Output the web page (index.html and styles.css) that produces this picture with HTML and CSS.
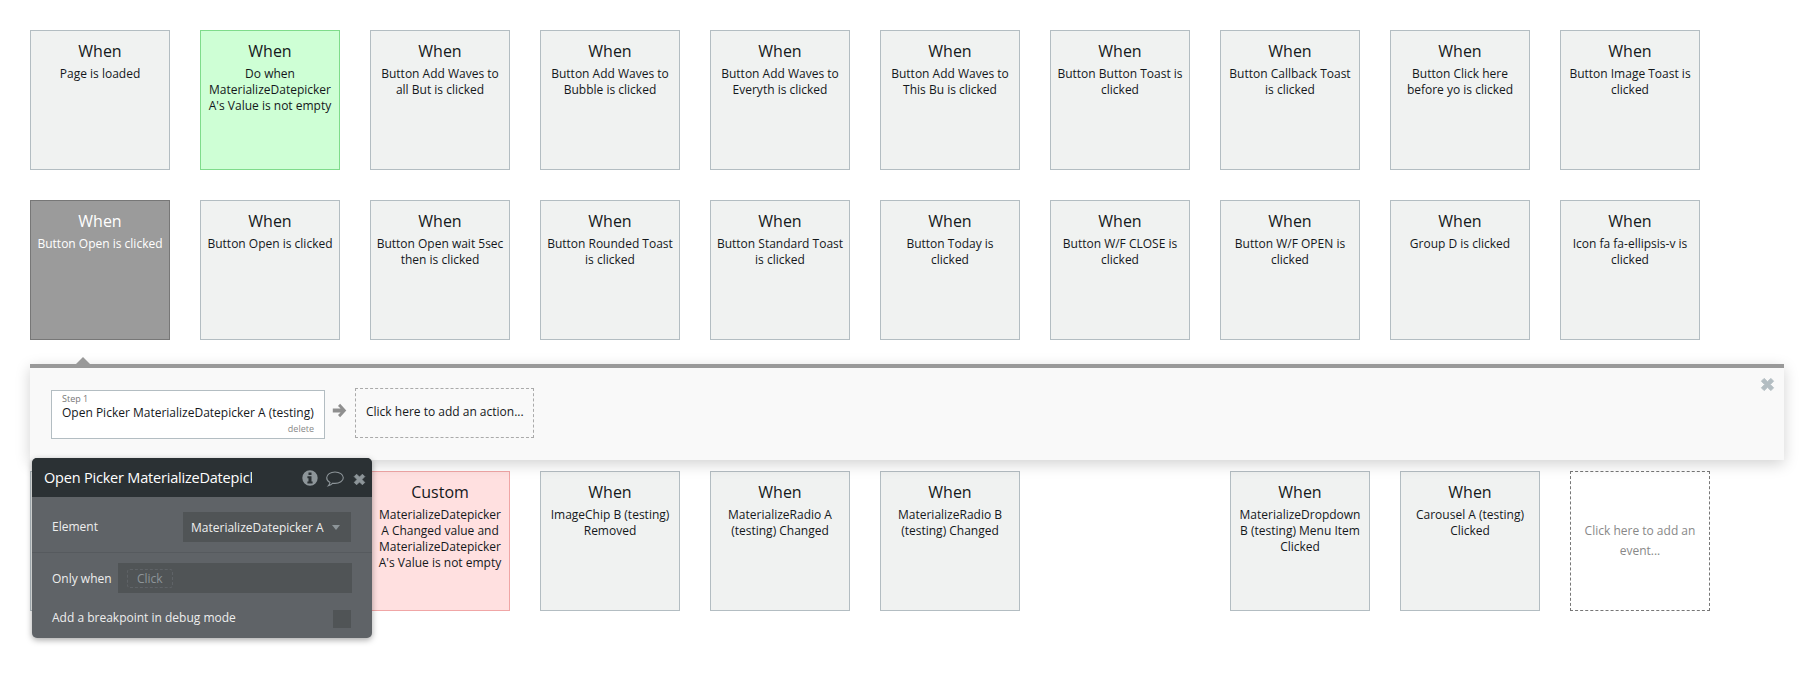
FILE: index.html
```html
<!DOCTYPE html>
<html lang="en">
<head>
    <meta charset="UTF-8">
    <meta name="viewport" content="width=device-width, initial-scale=1.0">
    <title>Workflow editor</title>
    <link rel="stylesheet" href="styles.css">
</head>
<body>
    <div class="row">
        <div class="card"><h3>When</h3><p>Page is loaded</p></div>
        <div class="card green"><h3>When</h3><p>Do when MaterializeDatepicker A's Value is not empty</p></div>
        <div class="card"><h3>When</h3><p>Button Add Waves to all But is clicked</p></div>
        <div class="card"><h3>When</h3><p>Button Add Waves to Bubble is clicked</p></div>
        <div class="card"><h3>When</h3><p>Button Add Waves to Everyth is clicked</p></div>
        <div class="card"><h3>When</h3><p>Button Add Waves to This Bu is clicked</p></div>
        <div class="card"><h3>When</h3><p>Button Button Toast is clicked</p></div>
        <div class="card"><h3>When</h3><p>Button Callback Toast is clicked</p></div>
        <div class="card"><h3>When</h3><p>Button Click here before yo is clicked</p></div>
        <div class="card"><h3>When</h3><p>Button Image Toast is clicked</p></div>
    </div>
    <div class="row">
        <div class="card selected"><h3>When</h3><p>Button Open is clicked</p></div>
        <div class="card"><h3>When</h3><p>Button Open is clicked</p></div>
        <div class="card"><h3>When</h3><p>Button Open wait 5sec then is clicked</p></div>
        <div class="card"><h3>When</h3><p>Button Rounded Toast is clicked</p></div>
        <div class="card"><h3>When</h3><p>Button Standard Toast is clicked</p></div>
        <div class="card"><h3>When</h3><p>Button Today is clicked</p></div>
        <div class="card"><h3>When</h3><p>Button W/F CLOSE is clicked</p></div>
        <div class="card"><h3>When</h3><p>Button W/F OPEN is clicked</p></div>
        <div class="card"><h3>When</h3><p>Group D is clicked</p></div>
        <div class="card"><h3>When</h3><p>Icon fa fa-ellipsis-v is clicked</p></div>
    </div>

    <div class="panel">
        <span class="panel-notch"></span>
        <div class="step">
            <span class="step-num">Step 1</span>
            <span class="step-name">Open Picker MaterializeDatepicker A (testing)</span>
            <span class="step-delete">delete</span>
        </div>
        <svg class="arrow" viewBox="0 0 14 15"><path d="M7.600 .8 13.800 7.500 7.600 14.200 5.500 12.100 8.100 9.500H.3V5.500H8.100L5.500 2.900z"/></svg>
        <div class="add-action">Click here to add an action...</div>
        <svg class="panel-close" viewBox="0 0 13 13"><path d="M3.600 1.200 6.500 4.100 9.400 1.200 11.800 3.600 8.900 6.500 11.800 9.400 9.400 11.800 6.500 8.900 3.600 11.800 1.200 9.400 4.100 6.500 1.200 3.600z"/></svg>
    </div>

    <div class="row row-last">
        <div class="card"></div>
        <div class="card"></div>
        <div class="card red"><h3>Custom</h3><p>MaterializeDatepicker A Changed value and MaterializeDatepicker A's Value is not empty</p></div>
        <div class="card"><h3>When</h3><p>ImageChip B (testing) Removed</p></div>
        <div class="card"><h3>When</h3><p>MaterializeRadio A (testing) Changed</p></div>
        <div class="card"><h3>When</h3><p>MaterializeRadio B (testing) Changed</p></div>
        <div class="card push"><h3>When</h3><p>MaterializeDropdown B (testing) Menu Item Clicked</p></div>
        <div class="card"><h3>When</h3><p>Carousel A (testing) Clicked</p></div>
        <div class="card add-event"><p>Click here to add an event...</p></div>
    </div>

    <div class="popup">
        <div class="popup-head">
            <span class="popup-title">Open Picker MaterializeDatepicker A (testing)</span>
            <svg class="head-icon info" viewBox="0 0 16 16"><path fill-rule="evenodd" d="M8 .3a7.700 7.700 0 1 0 0 15.400A7.700 7.700 0 0 0 8 .3zM6.500 2.600h3v2.500h-3zM5.400 6.300h4.100v5.200h1.100v2H5.400v-2h1.100V8.300H5.400z"/></svg>
            <svg class="head-icon bubble" viewBox="0 0 18 16"><path d="M9 1C13.500 1 17.300 3.500 17.300 6.700S13.500 12.400 9 12.400C8.200 12.400 7.500 12.300 6.800 12.200 5.800 13.300 4.300 14.300 2.300 14.800 3.200 13.800 3.800 12.700 4 11.500 2 10.500.7 8.700.7 6.700.7 3.500 4.500 1 9 1z"/></svg>
            <svg class="head-icon close" viewBox="0 0 13 13"><path d="M3.600 1.200 6.500 4.100 9.400 1.200 11.800 3.600 8.900 6.500 11.800 9.400 9.400 11.800 6.500 8.900 3.600 11.800 1.200 9.400 4.100 6.500 1.200 3.600z"/></svg>
        </div>
        <div class="popup-row border">
            <label>Element</label>
            <div class="dropdown">MaterializeDatepicker A<span class="caret"></span></div>
        </div>
        <div class="popup-row only-when">
            <label>Only when</label>
            <div class="cond"><span class="cond-click">Click</span></div>
        </div>
        <div class="popup-row breakpoint">
            <label>Add a breakpoint in debug mode</label>
            <span class="check"></span>
        </div>
    </div>
</body>
</html>
```

FILE: styles.css
```css
body {
    font-family: "Open Sans", sans-serif;
    margin: 0;
    padding: 30px 0 0 30px;
    background: #fff;
    color: #14181b;
    height: 650px;
    overflow: hidden;
    position: relative;
}
.row {
    display: flex;
    gap: 30px;
    margin-bottom: 30px;
}
.card {
    box-sizing: border-box;
    width: 140px;
    height: 140px;
    flex: none;
    padding: 9px 5px;
    text-align: center;
    background: #f0f2f1;
    border: 1px solid #b3bdc2;
}
.card h3 {
    margin: 0;
    font-size: 16px;
    font-weight: 400;
    line-height: 22px;
}
.card p {
    margin: 4px 0 0;
    font-size: 12px;
    line-height: 16px;
}
.green {
    background: #ceffd5;
    border-color: #7fdc8b;
}
.red {
    background: #ffe0e0;
    border-color: #f0a6a6;
}
.selected {
    background: #9b9b9b;
    border-color: #777;
    color: #fff;
}
.push {
    margin-left: 180px;
}
.add-event {
    background: #fff;
    border: 1px dashed #777;
    color: #888;
    display: flex;
    align-items: center;
}
.add-event p {
    margin: 0;
    line-height: 20px;
}

.panel {
    box-sizing: border-box;
    position: relative;
    width: 1754px;
    height: 96px;
    margin: -6px 0 11px;
    padding: 20px 21px 0;
    display: flex;
    align-items: flex-start;
    background: #f9f9f9;
    border-top: 4px solid #999;
    box-shadow: 0 4px 14px rgba(0, 0, 0, 0.18);
}
.panel-notch {
    position: absolute;
    left: 46px;
    top: -11px;
    border: 7px solid transparent;
    border-top: 0;
    border-bottom-color: #999;
}
.step {
    box-sizing: border-box;
    width: 274px;
    height: 49px;
    margin-top: 2px;
    padding: 2px 10px 0;
    display: flex;
    flex-direction: column;
    background: #fff;
    border: 1px solid #b3bdc2;
    font-size: 12px;
}
.step-num {
    font-size: 9px;
    line-height: 11px;
    color: #777;
}
.step-name {
    line-height: 17px;
    white-space: nowrap;
}
.step-delete {
    margin-top: 1px;
    font-size: 9px;
    line-height: 14px;
    color: #888;
    text-align: right;
}
.arrow {
    width: 15px;
    height: 15px;
    margin: 15px 8px 0 7px;
    fill: #8f8f8f;
}
.add-action {
    box-sizing: border-box;
    width: 179px;
    height: 50px;
    padding-left: 10px;
    line-height: 46px;
    font-size: 12px;
    white-space: nowrap;
    border: 1px dashed #aaa;
}
.panel-close {
    position: absolute;
    right: 9px;
    top: 9px;
    width: 15px;
    height: 15px;
    fill: #b3bdc2;
    stroke: #b3bdc2;
    stroke-width: 0.8;
    stroke-linejoin: round;
}

.popup {
    position: absolute;
    left: 32px;
    top: 458px;
    width: 340px;
    height: 180px;
    border-radius: 5px;
    background: #5f6367;
    color: #eee;
    font-size: 12px;
    box-shadow: 0 2px 6px rgba(0, 0, 0, 0.35);
    overflow: hidden;
}
.popup-head {
    display: flex;
    align-items: center;
    height: 39px;
    padding: 0 6px 0 12px;
    background: #2b3134;
}
.popup-title {
    width: 208px;
    margin-right: 50px;
    overflow: hidden;
    white-space: nowrap;
    font-size: 14.5px;
    letter-spacing: -0.2px;
    color: #fff;
}
.head-icon {
    flex: none;
    margin-top: 3px;
    fill: #8d9599;
}
.info {
    width: 16px;
    height: 16px;
    margin-top: 1px;
    margin-right: 8px;
}
.bubble {
    width: 18px;
    height: 16px;
    margin-right: 9px;
    fill: none;
    stroke: #8d9599;
    stroke-width: 1.1;
}
.close {
    width: 13px;
    height: 13px;
    stroke: #8d9599;
    stroke-width: 0.8;
    stroke-linejoin: round;
}
.popup-row {
    display: flex;
    align-items: center;
    justify-content: space-between;
    padding: 0 21px 0 20px;
}
.border {
    height: 50px;
    padding-top: 5px;
    border-bottom: 1px solid #565a5e;
}
.border label {
    margin-bottom: 2px;
}
.dropdown {
    box-sizing: border-box;
    width: 168px;
    height: 30px;
    padding-left: 8px;
    display: flex;
    align-items: center;
    justify-content: space-between;
    background: #505456;
}
.caret {
    margin-right: 11px;
    border: 4px solid transparent;
    border-top: 5px solid #8d9599;
    border-bottom: 0;
}
.only-when {
    height: 50px;
    padding-right: 20px;
}
.cond {
    box-sizing: border-box;
    width: 234px;
    height: 30px;
    padding-left: 9px;
    display: flex;
    align-items: center;
    background: #505456;
}
.cond-click {
    padding: 0 9px;
    line-height: 17px;
    border: 1px dashed #5f6367;
    border-radius: 3px;
    color: #8d9599;
}
.breakpoint {
    height: 32px;
}
.breakpoint label {
    margin-bottom: 3px;
}
.check {
    width: 18px;
    height: 18px;
    background: #505456;
}
```
